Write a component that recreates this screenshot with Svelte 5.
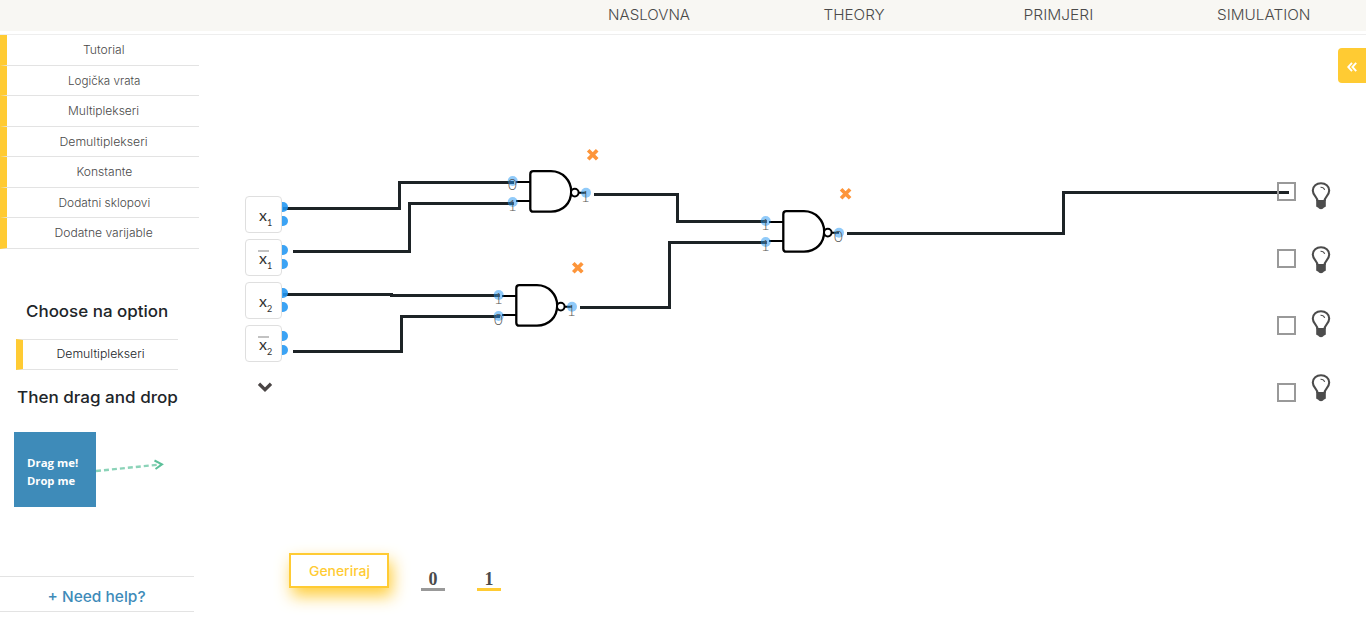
<script>
  const nav = [['NASLOVNA', 82], ['THEORY', 61], ['PRIMJERI', 70], ['SIMULATION', 93]];
  const menu = [
    ['Tutorial', 42], ['Logička vrata', 73], ['Multiplekseri', 71], ['Demultiplekseri', 88],
    ['Konstante', 56], ['Dodatni sklopovi', 92], ['Dodatne varijable', 98],
  ];
  const inputs = [
    { n: 1, bar: false }, { n: 1, bar: true }, { n: 2, bar: false }, { n: 2, bar: true },
  ];
  const wires = [
    'M283 208.5H399.5V182.5H514',
    'M293 251.5H409.5V203.5H514',
    'M283 294.5H391.5V295.5H500',
    'M293 351.5H401.5V316.5H500',
    'M594 194.5H677.5V221.5H767',
    'M580 307.5H669.5V242.5H767',
    'M847 233.5H1063.5V192.5H1289',
  ];
  const gates = [
    { x: 0, y: 0, v: ['0', '1', '1'] },
    { x: -14, y: 114, v: ['1', '0', '1'] },
    { x: 253, y: 40, v: ['1', '1', '0'] },
  ];
  const crosses = [[592.7, 154.7], [577.8, 267.8], [845.6, 193.8]];
  const outputs = [0, 1, 2, 3];

  // Stretches a label so that it takes exactly the given width.
  function fit(node, width) {
    node.style.transform = `scaleX(${width / node.offsetWidth})`;
  }
</script>

<div class="page">
  <header>
    <nav>
      {#each nav as [label, w]}
        <a><span use:fit={w}>{label}</span></a>
      {/each}
    </nav>
  </header>

  <div class="body">
    <aside>
      <ul class="menu">
        {#each menu as [label, w]}
          <li><span use:fit={w}>{label}</span></li>
        {/each}
      </ul>
      <div class="guide">
        <h5><span use:fit={142}>Choose na option</span></h5>
        <div class="choice"><span use:fit={88}>Demultiplekseri</span></div>
        <h5><span use:fit={161}>Then drag and drop</span></h5>
        <div class="drag">
          <div class="tile">
            <span use:fit={51}>Drag me!</span>
            <span use:fit={48}>Drop me</span>
          </div>
          <svg width="72" height="75" viewBox="96 432 72 75">
            <path d="M96 471L160 464.5" stroke="#8bd3b8" stroke-width="2.4" stroke-dasharray="5 3" fill="none" />
            <path d="M154.500 460.500L162 464.300L155.500 469" stroke="#5cc09a" stroke-width="2" fill="none" />
          </svg>
        </div>
      </div>
      <div class="help"><span use:fit={98}>+ Need help?</span></div>
    </aside>

    <main>
      <svg class="wires" width="1366" height="600" viewBox="0 35 1366 600">
        {#each wires as d}
          <path {d} fill="none" stroke="#1d2326" stroke-width="3" />
        {/each}
        {#each gates as g}
          <g transform="translate({g.x} {g.y})">
            <g fill="none" stroke="#000" stroke-width="2.3">
              <path d="M516 182H530M516 201H530M579 192.700H586" stroke-width="2" />
              <path d="M533.300 171.200H551C563 171.200 571.200 181 571.200 191.500C571.200 203 563 211.700 551 211.700H533.300Q530.300 211.700 530.300 208.700V174.200Q530.300 171.200 533.300 171.200Z" />
              <circle cx="574.800" cy="192.600" r="3.800" fill="#fff" stroke-width="2" />
            </g>
            <g class="ports">
              <circle cx="512.700" cy="181" r="5" />
              <circle cx="512.700" cy="202" r="5" />
              <circle cx="586" cy="192.800" r="5" />
            </g>
            <text x="512.300" y="189.500">{g.v[0]}</text>
            <text x="512.300" y="210.800">{g.v[1]}</text>
            <text x="585.300" y="201.800">{g.v[2]}</text>
          </g>
        {/each}
        {#each crosses as [x, y]}
          <path transform="translate({x} {y})" d="M-4.500 -4.500L4.500 4.500M4.500 -4.500L-4.500 4.500" stroke="#fd953a" stroke-width="3.700" />
        {/each}
      </svg>

      <div class="inputs">
        {#each inputs as i}
          <div class="var">
            <span class="x" class:bar={i.bar}>x<sub>{i.n}</sub></span>
            <div class="pins"><i></i><i></i></div>
          </div>
        {/each}
        <svg class="chev" width="16" height="10" viewBox="0 0 16 10">
          <path d="M2 1.800L8 7.600L14 1.800" fill="none" stroke="#4a4545" stroke-width="3.300" />
        </svg>
      </div>

      <div class="checks">
        {#each outputs as o}<div class="box"></div>{/each}
      </div>
      <div class="bulbs">
        {#each outputs as o}
          <svg width="20" height="28" viewBox="0 0 20 28">
            <path d="M6.500 19C6.500 15 1.800 13.500 1.800 8.500C1.800 4 5.500 1.300 10 1.300S18.200 4 18.200 8.500C18.200 13.500 13.500 15 13.500 19" fill="none" stroke="#4c4c4c" stroke-width="2.100" />
            <path d="M5.200 18H14.800V24.500Q14.500 25.200 13 25.500Q12 27.300 10 27.300T7 25.500Q5.500 25.200 5.200 24.500Z" fill="#4c4c4c" />
            <path d="M9.500 5.300Q12.700 5.200 13.700 7.900" fill="none" stroke="#4c4c4c" stroke-width="1.100" />
          </svg>
        {/each}
      </div>

      <button class="toggle" aria-label="Toggle">
        <svg width="10" height="10" viewBox="0 0 10 10">
          <path d="M5 0.800L1.200 5L5 9.200M9.200 0.800L5.400 5L9.200 9.200" fill="none" stroke="#fff" stroke-width="1.900" />
        </svg>
      </button>

      <div class="actions">
        <button class="gen"><span use:fit={61}>Generiraj</span></button>
        <div class="digit">0</div>
        <div class="digit on">1</div>
      </div>
    </main>
  </div>
</div>

<style>
  :global(body) { margin: 0; overflow: hidden; background: #fff; }
  .page { width: 1366px; height: 635px; font-family: Inter, sans-serif; color: #4a4a4a; overflow: hidden; }
  * { box-sizing: border-box; }
  span { display: inline-block; white-space: nowrap; }
  header { height: 35px; border-bottom: 1px solid #eee; }
  nav { height: 31px; background: #f8f7f3; padding-left: 546.4px; display: flex; }
  nav a { flex: 1; text-align: center; font-size: 14px; font-weight: 300; line-height: 30px; }
  .body { display: flex; height: 600px; }
  aside { width: 199px; display: flex; flex-direction: column; flex: none; }
  .menu { list-style: none; margin: 0; padding: 0; }
  .menu li, .choice {
    height: 30.5px; border-left: 7px solid #ffcb33; border-bottom: 1px solid #e3e3e3;
    font-size: 11px; font-weight: 300; line-height: 31.5px; text-align: center; padding-left: 2px;
  }
  .guide { padding: 50px 0 0 14px; }
  h5 { margin: 0; width: 166px; text-align: center; font-size: 16px; font-weight: 450; line-height: 24px; color: #212529; }
  .choice { width: 162px; height: 31px; margin: 16px 0 15px 2px; border-top: 1px solid #e3e3e3; color: #212529; line-height: 29px; padding-left: 0; }
  .drag { display: flex; margin-top: 23px; }
  .tile {
    width: 82px; height: 75px; background: #3e8bb9; color: #fff; padding: 22px 0 0 13px;
    display: flex; flex-direction: column; align-items: flex-start;
    font: bold 11px/18px "Open Sans", sans-serif;
  }
  .tile span { transform-origin: left; }
  .help {
    margin-top: 69px; width: 194px; height: 36px; text-align: center; line-height: 39px;
    border: solid #e3e3e3; border-width: 1px 0; color: #3e8bb9; font-size: 15px; font-weight: 450;
  }
  main { position: relative; flex: 1; }
  .wires { position: absolute; left: -199px; top: 0; }
  .ports { fill: #2196f3; fill-opacity: 0.5; }
  .wires text { font: 300 15px Lato, sans-serif; fill: #555; text-anchor: middle; }
  .inputs { position: absolute; left: 46px; top: 161px; display: flex; flex-direction: column; gap: 6px; }
  .var { display: flex; }
  .x {
    position: relative; width: 37px; height: 37px; border: 1px solid #dfdfdf; border-radius: 4px; background: #fff;
    font: 16px/35px Lato, sans-serif; color: #333; padding-left: 13px;
  }
  .x sub { font-size: 9px; line-height: 0; vertical-align: -5px; }
  .bar::before { content: ''; position: absolute; left: 12px; top: 10px; width: 11px; height: 2px; background: #c2c2c2; }
  .pins { padding-top: 6px; display: flex; flex-direction: column; gap: 4px; }
  .pins i { width: 6px; height: 10px; border-radius: 0 5px 5px 0; background: rgba(33, 150, 243, 0.88); }
  .chev { margin: 14px 0 0 12px; }
  .checks { position: absolute; left: 1078px; top: 147px; display: grid; gap: 48px; }
  .box { width: 19px; height: 19px; border: 2px solid #999; }
  .bulbs { position: absolute; left: 1112px; top: 147px; display: grid; gap: 36px; }
  .bulbs svg { display: block; }
  .toggle {
    position: absolute; right: 0; top: 13px; width: 28px; height: 35px; border: 0; padding: 3px 0 0;
    border-radius: 4px 0 0 4px; background: #ffcb33; display: flex; align-items: center; justify-content: center;
  }
  .actions { position: absolute; left: 90px; top: 518px; display: flex; }
  .gen {
    width: 100px; height: 35px; border: 2px solid #ffcb33; background: #fff; color: #ffcb33; padding: 1px 0 0;
    font: 500 13px Inter, sans-serif; box-shadow: 3px 8px 16px 0 rgba(255, 203, 51, 0.95);
  }
  .digit {
    margin: 17px 0 0 32px; width: 24px; height: 21px; border-bottom: 3px solid #999; text-align: center;
    font: bold 18px/19px "Liberation Serif", serif; color: #4a4a4a;
  }
  .digit.on { border-color: #ffcb33; }
</style>
